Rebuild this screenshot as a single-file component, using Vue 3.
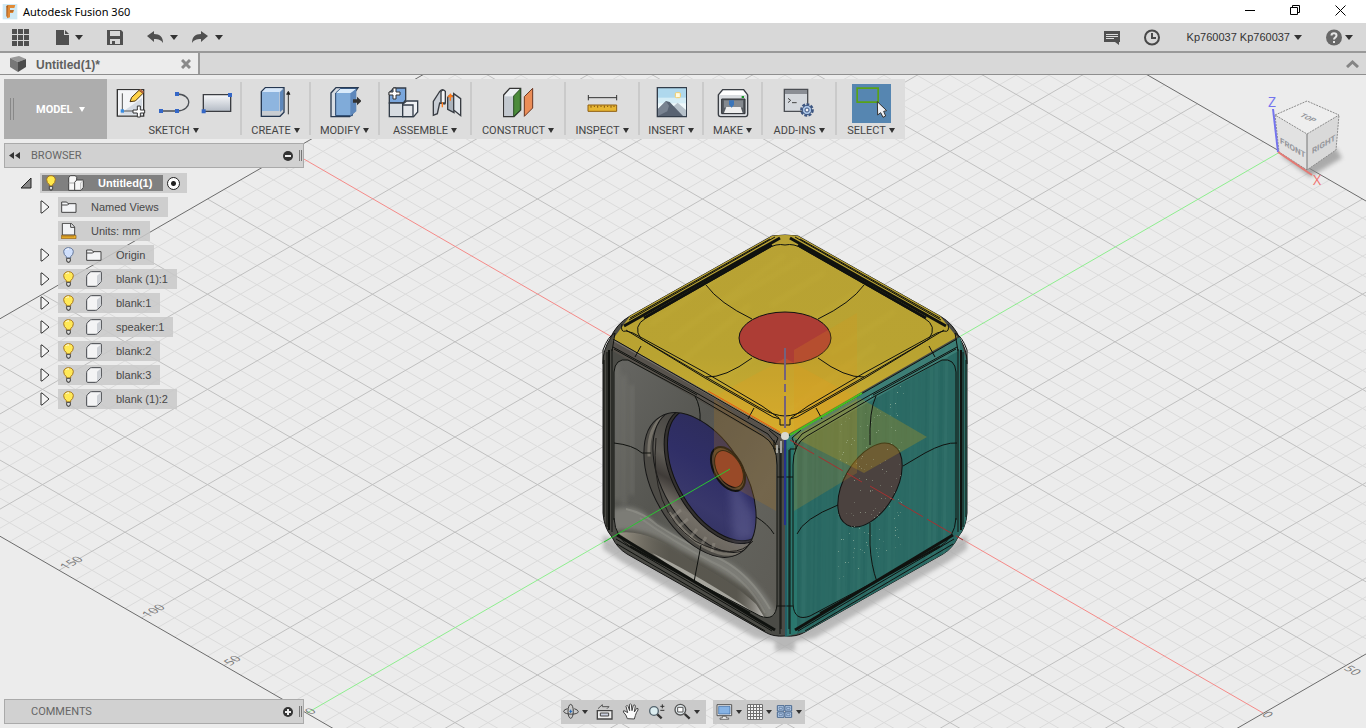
<script setup>
import { ref } from 'vue'

const rows = [
  { label: 'Named Views', kind: 'folder', open: true },
  { label: 'Units: mm', kind: 'units', open: false },
  { label: 'Origin', kind: 'folder', open: true, bulb: 'off' },
  { label: 'blank (1):1', kind: 'body', open: true, bulb: 'on' },
  { label: 'blank:1', kind: 'body', open: true, bulb: 'on' },
  { label: 'speaker:1', kind: 'body', open: true, bulb: 'on' },
  { label: 'blank:2', kind: 'body', open: true, bulb: 'on' },
  { label: 'blank:3', kind: 'body', open: true, bulb: 'on' },
  { label: 'blank (1):2', kind: 'body', open: true, bulb: 'on' },
]
const active = ref('SELECT')

// Ground plane: 16.5 x 9.52 px per minor cell, origin at (785, 437)
const pt = (u, v) => `${(785 + 16.5 * (u + v)).toFixed(1)} ${(437 + 9.52 * (u - v)).toFixed(1)}`
let minor = ''
let major = ''
for (let i = -29; i < 30; i++) {
  if (i === 0) continue
  const a = i < 29 ? `M${pt(i, -29)}L${pt(i, 30)}` : ''
  const b = i > -29 ? `M${pt(-30, i)}L${pt(29, i)}` : ''
  if (i % 5 === 0) major += a + b
  else minor += a + b
}
const border = `M${pt(-30, -29)}L${pt(29, -29)}L${pt(29, 30)}L${pt(-30, 30)}Z`

const specks = []
let seed = 7
const rnd = () => (seed = (seed * 16807) % 2147483647) / 2147483647
for (let i = 0; i < 150; i++) {
  const x = 838 + rnd() * 65
  specks.push({ x: Math.round(x), y: Math.round(395 + rnd() * 170 - (x - 870) * 0.45), o: 0.15 + rnd() * 0.35 })
}
const streaks = []
for (let i = 0; i < 36; i++) streaks.push({ x: 792 + i * 5, w: 1 + rnd() * 3, o: rnd() * 0.13, d: rnd() > 0.5 })
</script>

<template>
  <div class="app">
    <header class="titlebar">
      <svg class="logo" width="16" height="16" viewBox="0 0 48 48"><rect x="2" width="44" height="46" fill="#cfe9f5"/><path d="M13 6l6-3h21l-3 9H24v7h12l-3 8h-9v13l-9 3V12z" fill="#e18a35"/><path d="M13 6l6-3-2 9-1 28-3-3zM24 19h12l-4 4h-8z" fill="#a95d20"/></svg>
      <h1>Autodesk Fusion 360</h1>
      <div class="wincontrols">
        <button aria-label="Minimize"><svg width="11" height="11"><path d="M0 5.500h10" stroke="#000"/></svg></button>
        <button aria-label="Restore"><svg width="11" height="11" fill="none" stroke="#000"><path d="M.5 2.500h7v7h-7zM2.500 2.500v-2h7v7h-2"/></svg></button>
        <button aria-label="Close"><svg width="11" height="11" stroke="#000"><path d="M.5 .5l10 10M10.500 .5l-10 10"/></svg></button>
      </div>
    </header>

    <nav class="quick">
      <button class="gridbtn" aria-label="Data panel"><svg width="17" height="17" fill="#505050"><path d="M0 0h5v5H0zM6 0h5v5H6zM12 0h5v5h-5zM0 6h5v5H0zM6 6h5v5H6zM12 6h5v5h-5zM0 12h5v5H0zM6 12h5v5H6zM12 12h5v5h-5z"/></svg></button>
      <button class="split" aria-label="File"><svg width="14" height="17" fill="#505050"><path d="M0 1h8v5h5v10H0zM9 1l4 4H9z"/></svg><i class="caret"></i></button>
      <button aria-label="Save"><svg width="16" height="17"><path d="M0 1h14l2 2v13H0z" fill="#505050"/><path d="M3 2h10v5H3z" fill="#d8d8d8"/><path d="M3 10h10v5H3z" fill="#d8d8d8"/><path d="M5 12h3v3H5z" fill="#505050"/></svg></button>
      <div class="history">
        <button class="split" aria-label="Undo"><svg width="17" height="17"><path d="M0 7l7-5v3c6 0 9 3 9 9-2-3-4-4-9-4v3z" fill="#505050"/></svg><i class="caret"></i></button>
        <button class="split" aria-label="Redo"><svg width="17" height="17"><path d="M16 7l-7-5v3c-6 0-9 3-9 9 2-3 4-4 9-4v3z" fill="#505050"/></svg><i class="caret"></i></button>
      </div>
      <div class="account">
        <button aria-label="Notifications"><svg width="16" height="17"><path d="M0 2h16v11h-1v3l-4-3H0z" fill="#505050"/><path d="M2 5.500h12M2 7.500h12M2 9.500h8" stroke="#ddd"/></svg></button>
        <button aria-label="Job status"><svg width="16" height="17" fill="none" stroke="#484848" stroke-width="2"><circle cx="8" cy="8.500" r="7"/><path d="M8 4v5h4"/></svg></button>
        <button class="user">Kp760037 Kp760037<i class="caret"></i></button>
        <button class="split help" aria-label="Help"><svg width="17" height="17"><circle cx="8" cy="8.500" r="8" fill="#686868"/><path d="M5.500 6.500c0-3 5-3 5 0 0 2-2.500 2-2.500 4M8 12v2" fill="none" stroke="#e6e6e6" stroke-width="2"/></svg><i class="caret"></i></button>
      </div>
    </nav>

    <div class="tabs">
      <div class="tab">
        <svg width="16" height="16"><path d="M0 2l9-2 7 3-8 3z" fill="#999"/><path d="M0 2l8 4v10l-8-5z" fill="#777"/><path d="M8 6l8-3v8l-8 5z" fill="#4c4c4c"/></svg>
        <span>Untitled(1)*</span>
        <button aria-label="Close tab"><svg width="10" height="10" stroke="#8a8a8a" stroke-width="3"><path d="M1 1l8 8M9 1L1 9"/></svg></button>
      </div>
      <button class="collapse" aria-label="Collapse"><svg width="13" height="9" fill="none" stroke="#858585" stroke-width="3"><path d="M1 8l5.500-5L12 8"/></svg></button>
    </div>

    <main class="workspace">
      <svg class="scene" viewBox="0 75 1366 653" preserveAspectRatio="xMidYMid slice" aria-label="Model view">
        <defs>
          <linearGradient id="gold" x1="0" y1="0" x2="0" y2="1"><stop offset="0" stop-color="#b8a234"/><stop offset=".6" stop-color="#b9a331"/><stop offset="1" stop-color="#d2b030"/></linearGradient>
          <linearGradient id="metal" x1="0" y1="0" x2="1" y2="1"><stop offset="0" stop-color="#686864"/><stop offset=".4" stop-color="#565651"/><stop offset=".7" stop-color="#62625c"/><stop offset="1" stop-color="#5c5a54"/></linearGradient>
          <linearGradient id="cone" x1="0" y1="0" x2="1" y2="1"><stop offset="0" stop-color="#2c2b54"/><stop offset=".5" stop-color="#302f67"/><stop offset=".75" stop-color="#39386b"/><stop offset="1" stop-color="#2f2f5d"/></linearGradient>
          <linearGradient id="wall" x1="0" y1="0" x2="1" y2="1"><stop offset="0" stop-color="#3d3c39"/><stop offset=".3" stop-color="#4c4a46"/><stop offset=".5" stop-color="#5f5c56"/><stop offset=".62" stop-color="#3f3b38"/><stop offset=".75" stop-color="#757068"/><stop offset="1" stop-color="#5a564f"/></linearGradient>
          <linearGradient id="edgeglow" x1="0" y1="0" x2="1" y2="0"><stop offset="0" stop-color="#b9b1a0" stop-opacity=".7"/><stop offset=".35" stop-color="#6a675e" stop-opacity=".2"/><stop offset=".8" stop-color="#6a675e" stop-opacity=".2"/><stop offset="1" stop-color="#c9c7c2"/></linearGradient>
          <filter id="soft" x="-20%" y="-20%" width="140%" height="140%"><feGaussianBlur stdDeviation="2"/></filter>
          <filter id="blend" x="-20%" y="-20%" width="140%" height="140%"><feGaussianBlur stdDeviation="4"/></filter>
          <clipPath id="hole"><ellipse cx="700" cy="485" rx="79" ry="46" transform="rotate(60 700 485)"/></clipPath>
          <clipPath id="teal"><path d="M785 437L960 337L967 362V513Q966 528 958 537Q953 548 943 554L805 632L785 637z"/></clipPath>
          <clipPath id="panel"><path d="M614 372Q615 358 628 360L765 438Q777 446 777 465V605Q776 622 760 616L632 548Q614 536 614 518z"/></clipPath>
        </defs>

        <path :d="minor" fill="none" stroke="#dbdbdb"/>
        <path :d="major" fill="none" stroke="#c0c0c0"/>
        <path :d="border" fill="none" stroke="#6c6c6c"/>
        <path d="M290 151L785 437" stroke="#f58a88"/>
        <path d="M785 437L1263 713" stroke="#f58a88"/>
        <path d="M307 713L1280 152" stroke="#8eee8e"/>
        <!-- labels lie flat on the ground plane -->
        <g class="ticks">
          <text transform="matrix(.87 -.5 .87 .5 66 570)">150</text>
          <text transform="matrix(.87 -.5 .87 .5 148 618)">100</text>
          <text transform="matrix(.87 -.5 .87 .5 230 666)">50</text>
          <text transform="matrix(.87 -.5 .87 .5 311 715)">0</text>
          <text transform="matrix(.87 .5 -.87 .5 1261 715)">0</text>
          <text transform="matrix(.87 .5 -.87 .5 1343 669)">50</text>
        </g>

        <path d="M603 535L603 549L622 562L755 638L775 642V651H795V642L815 638L948 562L967 549V535L785 610z" fill="#a7a7a7" opacity=".75" filter="url(#soft)"/>

        <!-- cube body -->
        <path d="M772 236Q785 234 798 236L940 316Q954 324 960 339Q967 350 967 362V513Q966 528 958 537Q953 548 943 554L805 632Q797 637 785 636Q773 637 765 632L627 554Q617 548 612 537Q604 528 603 513V362Q603 350 610 339Q616 324 630 316z" fill="#4b4b46" stroke="#161616"/>
        <path d="M785 437L960 337L967 362V513Q966 528 958 537Q953 548 943 554L805 632L785 636z" fill="#2b6a64"/>
        <g clip-path="url(#teal)">
          <path v-for="s in streaks" :key="s.x" :d="`M${s.x} 330l-4 310`" :stroke="s.d ? '#0e4a49' : '#5d9a8d'" :stroke-width="s.w" :opacity="s.o"/>
          <path d="M785 437L960 337V350L785 450z" fill="#4a8c82" opacity=".6"/>
          <path d="M785 437h12v200h-12z" fill="#2c8175" opacity=".6"/>
        </g>
        <path d="M772 236Q785 234 798 236L940 316L957 337L785 436L613 339L630 316z" fill="url(#gold)"/>
        <g stroke="#d0bd47" stroke-width="5" opacity=".12" filter="url(#soft)"><path d="M650 325L745 257M670 340L785 255M683 360L750 305M720 380L765 350M800 260L715 310M825 272L770 306M860 290L805 325M895 311L830 354M875 345L790 410M850 363L805 398"/></g>
        <path d="M613 339L785 436V449L611 350z" fill="#57524c"/>
        <path d="M613 340L785 437" stroke="#7a756d" stroke-width="2"/>

        <!-- front panel -->
        <g clip-path="url(#panel)">
          <path d="M610 350H780V630H610z" fill="url(#metal)"/>
          <path d="M617 365V500M624 375V505M632 385V495" stroke="#7c7c77" stroke-width="5" opacity=".4" filter="url(#soft)"/>
          <path d="M612 510Q636 500 655 523Q685 541 716 556Q752 570 776 612L772 625L612 543z" fill="#7b7b76" filter="url(#soft)"/>
          <path d="M612 532Q640 524 680 550Q720 570 748 590Q761 602 766 622L612 545z" fill="#55524b" filter="url(#soft)"/>
          <path d="M618 533Q648 528 690 560Q730 580 756 604L766 620L690 582z" fill="url(#edgeglow)"/>
          <path d="M626 509Q644 513 657 525Q690 546 716 557Q748 571 770 609" fill="none" stroke="#9a9992" stroke-width="2" opacity=".5"/>
          <path d="M640 518Q672 541 712 562Q746 577 765 613" fill="none" stroke="#96958e" stroke-width="2" opacity=".4"/>
          <path d="M652 553Q690 571 740 603L757 615L694 583z" fill="#c6c4bd" opacity=".7"/>
        </g>
        <g clip-path="url(#hole)">
          <path d="M640 405H765V565H640z" fill="#4d4b46"/>
          <ellipse cx="704" cy="483" rx="78" ry="45" transform="rotate(60 704 483)" fill="none" stroke="#a8a195" stroke-width="3" stroke-dasharray="90 60 120 400" opacity=".45"/>
          <ellipse cx="709" cy="480" rx="79" ry="46" transform="rotate(60 709 480)" fill="url(#wall)" stroke="#171717"/>
          <path d="M671 518l10-8M678 527l10-8M690 538l7-9M701 546l5-9M712 552l2-9" stroke="#a19c91" stroke-width="3" opacity=".4"/>
          <ellipse cx="717" cy="475" rx="75" ry="43" transform="rotate(60 717 475)" fill="#34312f" stroke="#111"/>
          <ellipse cx="719" cy="474" rx="73" ry="42" transform="rotate(60 719 474)" fill="url(#cone)" stroke="#111"/>
          <path d="M728 469L734 542L754 538V515z" fill="#7070a1" opacity=".4" filter="url(#blend)"/>
        </g>
        <ellipse cx="700" cy="485" rx="79" ry="46" transform="rotate(60 700 485)" fill="none" stroke="#161616"/>
        <path d="M656 438Q649 510 695 541Q735 562 753 541" fill="none" stroke="#22201e"/>
        <ellipse cx="728" cy="469" rx="24" ry="14" transform="rotate(60 728 469)" fill="#55432f" stroke="#111" stroke-width="2"/>
        <ellipse cx="729" cy="469" rx="20" ry="12" transform="rotate(60 729 469)" fill="#953c2b" stroke="#17110c"/>

        <ellipse cx="785" cy="338" rx="46" ry="26" fill="#ad3d35" stroke="#111"/>
        <ellipse cx="870" cy="485" rx="46" ry="26" transform="rotate(-60 870 485)" fill="#4b423f" stroke="#111"/>

        <!-- origin planes -->
        <path d="M714 399V476L776 511V444z" fill="#a87320" opacity=".27"/>
        <path d="M794 350L857 313V473L794 511z" fill="#dc951b" opacity=".2"/>
        <path d="M714 397L785 358L857 398L785 437z" fill="#f29b17" opacity=".2"/>
        <path d="M793 437L860 398L927 437L864 473z" fill="#b7941b" opacity=".33"/>
        <rect v-for="(p, i) in specks" :key="i" :x="p.x" :y="p.y" width="1" height="1" fill="#c4d5bc" :opacity="p.o"/>

        <!-- symmetric edge lines: left half, then its mirror -->
        <g v-for="side in ['', 'translate(1570 0) scale(-1 1)']" :key="side" :transform="side" class="edges">
          <path d="M624 326L780 238" stroke-width="3"/>
          <path d="M630 318L770 239M629 320L775 237"/>
          <path d="M644 318L772 245" stroke-width="3"/>
          <path d="M785 245Q776 243 767 249L646 318Q632 326 641 339L706 377L760 408Q775 416 785 416"/>
          <path d="M706 285Q719 303 752 319M706 377Q725 378 752 358"/>
          <path d="M622 324q-2 9 4 7l7 2L706 373L762 406L779 418M626 330L705 378L773 417l7 2v6h5"/>
          <path d="M613 339L782 436M613 347L700 395L768 434l7 9M614 349L697 395"/>
          <path d="M641 346l-6 11M754 408l-6 11"/>
          <path d="M614 520V372Q615 358 628 360L695 396L763 436Q777 444 777 465V604Q776 622 760 616L632 548Q615 538 614 518"/>
          <path d="M777 477H785M777 606H785"/>
          <path d="M604 360V517M607 352V527M612 349V532"/>
          <path d="M609 350V530" stroke-width="2"/>
          <path d="M617 535L775 630" stroke-width="3"/>
          <path d="M616 539L772 631M617 544L765 631"/>
          <path d="M630 546L750 613" stroke-width="2"/>
          <path d="M781 450V629M774 440v9h6v185M769 430l9 8-3 7"/>
          <path d="M603 364V350Q608 336 615 333l-3 18"/>
        </g>
        <g class="edges">
          <path d="M695 396Q701 407 700 421M614 443Q633 445 642 453H651M756 517Q768 524 774 534M701 545L694 582"/>
          <path d="M876 396Q869 410 870 445M957 443Q945 442 925 453L903 466M838 505Q803 519 797 534M870 523V545Q871 565 877 582"/>
        </g>
        <path d="M786 437V636" stroke="#1c4860"/>
        <path d="M785 437V525" stroke="#25328c" stroke-width="2"/>
        <path d="M785 348V437" stroke="#73627e" stroke-width="2" stroke-dasharray="32 4 8 4"/>
        <path d="M708 391L780 432" stroke="#e65517"/>
        <path d="M790 435L862 393" stroke="#44c51d" stroke-width="2"/>
        <path d="M604 542L730 469" stroke="#2ac632"/>
        <path d="M790 440L862 482M870 486L963 540" stroke="#a53030" stroke-dasharray="28 5"/>
        <circle cx="785" cy="436" r="4" fill="#d9d9d0"/>
        <path d="M777 445v8M781 441v12" stroke="#a7a7a0" stroke-width="2"/>
      </svg>

      <svg class="viewcube" width="90" height="100" viewBox="1260 92 90 100" aria-label="View cube">
        <path d="M1280 155L1310 177L1342 158L1336 148z" fill="#888" opacity=".65" filter="url(#soft)"/>
        <path d="M1275 115L1307 101L1339 115L1307 134z" fill="#eee"/>
        <path d="M1275 115L1307 134V170L1279 152z" fill="#e2e2e2"/>
        <path d="M1307 134L1339 115L1336 150L1307 170z" fill="#d9d9d9"/>
        <path d="M1275 115L1307 101L1339 115L1307 134zL1279 152L1307 170L1336 150L1339 115" fill="none" stroke="#8b8b8b" stroke-dasharray="2 1"/>
        <path d="M1307 134V170" stroke="#777"/>
        <path d="M1273 109L1278 152" stroke="#7474ee" stroke-width="2"/>
        <path d="M1278 152L1312 175" stroke="#e57973" stroke-width="2"/>
        <text class="axis z" x="1268" y="107">Z</text>
        <text class="axis x" x="1313" y="185">X</text>
        <text class="face" transform="translate(1280 143) skewY(31)">FRONT</text>
        <text class="face" transform="translate(1312 154) skewY(-31)">RIGHT</text>
        <text class="face" transform="matrix(.9 .4 -.8 .5 1299 116)">TOP</text>
      </svg>

      <div class="overlay">
        <div class="ribbon">
          <button class="mode"><span class="grip"></span>MODEL<i class="caret light"></i></button>
          <section class="group sketch">
            <div class="tools">
              <button aria-label="Create sketch"><svg width="32" height="32" viewBox="345 261 96 96"><path d="M352 269h79v79h-79z" fill="#e9edf3" stroke="#333" stroke-width="4"/><path d="M354 271h75v75h-75z" fill="#f4f5f7"/><path d="M356 344l70-50v50z" fill="#d5dbe3"/><path d="M367 280v53h42" fill="none" stroke="#555" stroke-width="3"/><rect x="362" y="328" width="10" height="10" fill="#388be0"/><path d="M390 305l5-13 22-21 12 9-23 23z" fill="#ffd347" stroke="#4c3511" stroke-width="3"/><path d="M417 271l5-4 10 8-4 6z" fill="#b76a3d"/><path d="M399 330h13v-12h9v12h13v9h-13v12h-9v-12h-13z" fill="#fff" stroke="#333" stroke-width="3"/></svg></button>
              <button aria-label="Line"><svg width="32" height="32" viewBox="474 261 96 96"><path d="M483 333h48c46 0 48-51 0-51" fill="none" stroke="#4b4f54" stroke-width="4"/><path d="M477 327h12v12h-12zM525 327h12v12h-12zM525 276h12v12h-12z" fill="#3467c7"/></svg></button>
              <button aria-label="Rectangle"><svg width="32" height="32" viewBox="603 261 96 96"><defs><linearGradient id="sheet" x1="0" y1="0" x2="0" y2="1"><stop offset="0" stop-color="#f8f9fb"/><stop offset="1" stop-color="#b3bac4"/></linearGradient></defs><path d="M610 284h82v50h-82z" fill="url(#sheet)" stroke="#3b3d42" stroke-width="4"/><path d="M605 328h12v12h-12zM684 279h12v12h-12z" fill="#3467c7"/></svg></button>
            </div><button class="label">SKETCH<i class="caret"></i></button>
          </section>
          <section class="group create"><div class="tools"><button aria-label="Create"><svg width="32" height="32" viewBox="780 261 96 96"><path d="M784 275l12-12h56v74l-12 12h-56z" fill="#c9cdd2" stroke="#263852" stroke-width="4"/><path d="M786 276l11-11h51l-9 11z" fill="#d4e6fa"/><path d="M786 276h52v57h-52z" fill="#8eb5df"/><path d="M840 276l10-10v62l-10 8z" fill="#5d87bb"/><path d="M865 343v-62M860 283l5-9 5 9z" stroke="#333" stroke-width="3"/></svg></button></div><button class="label">CREATE<i class="caret"></i></button></section>
          <section class="group modify"><div class="tools"><button aria-label="Modify"><svg width="32" height="32" viewBox="984 261 96 96"><path d="M990 279l15-16h66l-12 17v55l-13 15h-56z" fill="#d8dde4" stroke="#29394f" stroke-width="4"/><path d="M1004 279l15-14h48l-13 14v68h-50z" fill="#80abd9" stroke="#24436b" stroke-width="3"/><path d="M1018 267h48l-14 12h-46z" fill="#d9eafa"/><path d="M1048 280l18-14v68l-18 14z" fill="#5d87bb"/><path d="M1056 298h12v-8l14 13-14 13v-8h-12z" fill="#333"/></svg></button></div><button class="label">MODIFY<i class="caret"></i></button></section>
          <section class="group assemble"><div class="tools">
            <button aria-label="New component"><svg width="32" height="32" viewBox="1161 261 96 96"><g stroke="#333d49" stroke-width="4"><path d="M1168 278l14-14h35v36l-7 9h-42z" fill="#79a6dc"/><path d="M1168 309h40v41h-40z" fill="#d7dce1"/><path d="M1208 313l12-10h33v33l-12 14h-33z" fill="#f0f2f5"/><path d="M1208 315h31v35h-31z" fill="#e2e5e9"/></g><path d="M1167 276h12v-12h9v12h12v9h-12v12h-9v-12h-12z" fill="#fff" stroke="#333" stroke-width="3"/></svg></button>
            <button aria-label="Joint"><svg width="32" height="32" viewBox="1293 261 96 96"><g stroke="#383c42" stroke-width="4"><path d="M1300 304l18-28q10-14 16 0v36l-15-3-7 32-12 5z" fill="#c9ced5"/><path d="M1323 275v34h13v-35q-7-8-13 1z" fill="#f4f5f6"/><path d="M1343 292q8-12 19 0v46l-19-10z" fill="#aab2bc"/><path d="M1361 281l21 15v51l-21-17z" fill="#e1e5ea"/></g><path d="M1327 307v15M1351 302v-17M1346 290l5-7 5 7z" stroke="#ff7a18" stroke-width="4"/></svg></button>
          </div><button class="label">ASSEMBLE<i class="caret"></i></button></section>
          <section class="group construct"><div class="tools"><button aria-label="Construct"><svg width="32" height="32" viewBox="156 51 96 96"><path d="M161 75l18-20h33v65l-20 20h-31z" fill="#eceff2" stroke="#353535" stroke-width="4"/><path d="M163 79h27v59h-27z" fill="#c3c9d0"/><path d="M191 78l20-21v63l-20 19z" fill="#4b8b3b" stroke="#274d22" stroke-width="3"/><path d="M223 80l25-25v59l-25 25z" fill="#eb8d57" stroke="#6d3620" stroke-width="3"/></svg></button></div><button class="label">CONSTRUCT<i class="caret"></i></button></section>
          <section class="group inspect"><div class="tools"><button aria-label="Measure"><svg width="32" height="32" viewBox="405 51 96 96"><path d="M412 83h85M412 75v16M497 75v16" stroke="#333" stroke-width="3"/><path d="M411 105h86v19h-86z" fill="#e7b632" stroke="#905e10" stroke-width="3"/><path d="M420 107v6M430 107v4M440 107v6M450 107v4M460 107v6M470 107v4M480 107v6M489 107v4" stroke="#80500d" stroke-width="3"/></svg></button></div><button class="label">INSPECT<i class="caret"></i></button></section>
          <section class="group insert"><div class="tools"><button aria-label="Insert image"><svg width="32" height="32" viewBox="612 51 96 96"><path d="M619 53h88v87h-88z" fill="#afd8ed" stroke="#333d4a" stroke-width="4"/><path d="M621 83h84v27h-84z" fill="#d5edf6"/><path d="M621 100h84v20h-84z" fill="#eef8fb"/><rect x="673" y="68" width="15" height="15" rx="3" fill="#fffce4" stroke="#f5cc65" stroke-width="3"/><path d="M655 120l25-22 25 22v18h-50z" fill="#b6c1ca"/><path d="M621 117l24-24 11 3 40 42h-75z" fill="#596372"/><path d="M645 94l9 13-5 17-28 14v-20z" fill="#798391"/></svg></button></div><button class="label">INSERT<i class="caret"></i></button></section>
          <section class="group make"><div class="tools"><button aria-label="3D print"><svg width="32" height="32" viewBox="801 51 96 96"><path d="M805 75l13-16h63l12 16v58q0 7-7 7h-74q-7 0-7-7z" fill="#d9dce0" stroke="#3b3f45" stroke-width="4"/><path d="M808 75l12-13h59l11 13z" fill="#fff"/><path d="M815 87h70v44h-70z" fill="#555a60" stroke="#2c2f33" stroke-width="3"/><path d="M822 91h57v22h-57z" fill="#84898f"/><path d="M829 111h43l6 18h-56z" fill="#eee"/><path d="M837 91h15v13l-7 9-8-9z" fill="#3a75ba"/><rect x="875" y="78" width="7" height="6" fill="#199528"/></svg></button></div><button class="label">MAKE<i class="caret"></i></button></section>
          <section class="group addins"><div class="tools"><button aria-label="Scripts"><svg width="32" height="32" viewBox="999 51 96 96"><path d="M1003 58h70v66h-70z" fill="#d4d8dd" stroke="#4b4e53" stroke-width="4"/><path d="M1005 60h66v12h-66z" fill="#8a8e95"/><path d="M1014 85l8 6-8 7M1026 98h14" fill="none" stroke="#444" stroke-width="3"/><g transform="translate(1071 120)"><circle r="16" fill="none" stroke="#3d5681" stroke-width="9" stroke-dasharray="8 4"/><circle r="14" fill="#a9c3e4" stroke="#3d5681" stroke-width="3"/><circle r="6" fill="#f2f4f7" stroke="#3d5681" stroke-width="3"/></g></svg></button></div><button class="label">ADD-INS<i class="caret"></i></button></section>
          <section class="group select"><div class="tools"><button class="on" aria-label="Select" :aria-pressed="active === 'SELECT'"><svg width="39" height="39" viewBox="1203 41 117 117"><path d="M1218.500 53.500h63v42h-63z" fill="none" stroke="#58a217" stroke-width="5"/><path d="M1279 94l1 40 9-7 7 14 8-4-6-14 9-2z" fill="#eef0f4" stroke="#333" stroke-width="3"/></svg></button></div><button class="label">SELECT<i class="caret"></i></button></section>
        </div>

        <div class="dock top">
          <svg width="11" height="7" fill="#333"><path d="M0 3.500L5 0v7zM6 3.500L11 0v7z"/></svg><span>BROWSER</span>
          <button aria-label="Hide browser"><svg width="10" height="10"><circle cx="5" cy="5" r="5" fill="#333"/><path d="M2 5h6" stroke="#eee" stroke-width="2"/></svg></button><i class="handle"></i>
        </div>

        <ul class="tree">
          <li class="root">
            <button class="expander" aria-label="Collapse tree"><svg width="12" height="12"><path d="M11 1v10H1z" fill="#888" stroke="#222"/></svg></button>
            <div class="rootbox"><div class="rootname">
              <svg width="10" height="16" viewBox="0 0 30 48"><path d="M10 29Q2 23 2 14C2-2 28-2 28 14q0 9-8 15v4H10z" fill="#ffe94c" stroke="#a6751d" stroke-width="3"/><path d="M10 34h10v9h-3v3h-4v-3h-3z" fill="#ddd" stroke="#444" stroke-width="3"/></svg>
              <svg class="assembly" width="16" height="16" viewBox="0 0 48 48" stroke="#444" stroke-width="3" fill="#f7f7f7"><path d="M2 8l5-6h15l4 5v35l-4 4H2z"/><path d="M2 24h18" stroke="#aaa"/><path d="M20 22l6-7h20v22l-7 9H20z"/><path d="M38 45V24l7-7" fill="none" stroke="#bbb"/></svg>
              <strong>Untitled(1)</strong></div>
              <label class="radio"><input type="radio" name="activate" checked aria-label="Activate component"></label>
            </div>
          </li>
          <li v-for="row in rows" :key="row.label">
            <button v-if="row.open" class="expander" :aria-label="`Expand ${row.label}`"><svg width="10" height="14"><path d="M1 1h1l7 6-7 6H1z" fill="#f5f5f5" stroke="#333"/></svg></button>
            <span v-else class="expander"></span>
            <div class="node">
              <svg v-if="row.bulb" class="bulb" width="11" height="16" viewBox="0 0 33 48"><path d="M10 29Q2 23 2 14C2-2 31-2 31 14q0 9-8 15v4H10z" :fill="row.bulb === 'on' ? '#ffe957' : '#cfdffc'" :stroke="row.bulb === 'on' ? '#a77720' : '#63779b'" stroke-width="3"/><path d="M10 8q4-4 8-2" stroke="#fff" fill="none" stroke-width="3"/><path d="M11 34h11v9h-3v3h-5v-3h-3z" fill="#ddd" stroke="#444" stroke-width="3"/></svg>
              <svg v-if="row.kind === 'folder'" width="16" height="16" viewBox="0 0 48 48"><path d="M2 9h15l4 5h24v26H2z" fill="#f3f4f6" stroke="#444" stroke-width="3"/><path d="M3 18h17l4-4" fill="none" stroke="#444" stroke-width="3"/></svg>
              <svg v-else-if="row.kind === 'units'" width="16" height="16" viewBox="0 0 48 48"><path d="M4 1h27l10 11v24H4z" fill="#f2f3f5" stroke="#444" stroke-width="3"/><path d="M29 1v12h12" fill="none" stroke="#444" stroke-width="3"/><path d="M1 37h44v10H1z" fill="#efb32a" stroke="#865510" stroke-width="2"/><path d="M6 39v4M12 39v4M18 39v4M24 39v4M30 39v4M36 39v4" stroke="#865510" stroke-width="2"/></svg>
              <svg v-else width="16" height="16" viewBox="0 0 48 48"><path d="M2 17Q2 13 5 10L13 3Q14 2 17 2H44Q46 2 46 5V29Q46 32 43 35L34 44Q32 46 28 46H5Q2 46 2 43z" fill="#f4f4f5" stroke="#44464b" stroke-width="3"/><path d="M33 44V14L44 5V31z" fill="#ced1d6"/></svg>
              <span :class="row.bulb ? 'deep' : 'name'">{{ row.label }}</span>
            </div>
          </li>
        </ul>

        <footer class="bottom">
          <div class="dock"><span class="comments">COMMENTS</span><button aria-label="Add comment"><svg width="10" height="10"><circle cx="5" cy="5" r="5" fill="#333"/><path d="M2 5h6M5 2v6" stroke="#eee" stroke-width="2"/></svg></button><i class="handle"></i></div>
          <div class="navbars">
            <div class="bar view">
              <button class="split" aria-label="Orbit"><svg width="18" height="18" viewBox="36 39 54 54" fill="none" stroke="#444" stroke-width="3"><ellipse cx="62" cy="64" rx="8" ry="21"/><path d="M73 56q12 4 12 9c0 10-40 10-44 0q0-7 12-9"/><path d="M58 64h9M62 59v10" stroke="#2466b5"/></svg><i class="caret"></i></button>
              <button aria-label="Look at"><svg width="18" height="18" viewBox="136 39 54 54"><path d="M140 62h44v25h-44z" fill="#eee" stroke="#444" stroke-width="4"/><path d="M149 69h25v9h-25z" fill="#ccd2e0" stroke="#444" stroke-width="3"/><path d="M142 56l13-12v6h20l-6 6" fill="none" stroke="#555" stroke-width="3"/></svg></button>
              <button aria-label="Pan"><svg width="18" height="18" viewBox="214 39 54 54"><path d="M230 86q-3-12-12-20-1-6 5-3l8 5-5-19q3-6 6 0l5 13-1-18q4-5 6 0l2 18 4-16q5-4 6 2l-3 18 7-11q6-1 4 5-6 8-8 17l-3 10z" fill="#fafafa" stroke="#444" stroke-width="3"/></svg></button>
              <button aria-label="Zoom"><svg width="18" height="18" viewBox="291 39 54 54"><circle cx="309" cy="63" r="13" fill="#dcedf0" stroke="#53636d" stroke-width="4"/><path d="M319 73l13 12" stroke="#333" stroke-width="7"/><path d="M328 49h12M334 43v12M328 61h12" stroke="#333" stroke-width="3"/></svg></button>
              <button class="split" aria-label="Fit"><svg width="18" height="18" viewBox="370 39 54 54"><circle cx="389" cy="59" r="16" fill="#e4ecef" stroke="#555" stroke-width="4"/><path d="M381 52h16v14h-16z" fill="#fff" stroke="#555" stroke-width="3"/><path d="M402 72l15 14" stroke="#333" stroke-width="7"/></svg><i class="caret"></i></button>
            </div>
            <div class="bar">
              <button class="split" aria-label="Display settings"><svg width="18" height="18" viewBox="494 39 54 54"><path d="M497 44h44v33h-44z" fill="#eee" stroke="#555" stroke-width="3"/><path d="M502 49h34v23h-34z" fill="#86b3e5" stroke="#315f99" stroke-width="2"/><path d="M513 79h12v5h7v4h-26v-4h7z" fill="#eee" stroke="#444" stroke-width="2"/></svg><i class="caret"></i></button>
              <button class="split" aria-label="Grid settings"><svg width="18" height="18"><path d="M1 1h16v16H1z" fill="#f3f3f3"/><path d="M1.500 1.500h15v15h-15zM4.500 1v16M7.500 1v16M10.500 1v16M13.500 1v16M1 4.500h16M1 7.500h16M1 10.500h16M1 13.500h16" fill="none" stroke="#6f6f6f"/></svg><i class="caret"></i></button>
              <button class="split" aria-label="Viewports"><svg width="18" height="18" viewBox="678 39 54 54" fill="#bbd1ec" stroke="#47678f" stroke-width="3"><path d="M682 47h20v16h-20zM705 47h20v16h-20zM682 66h20v16h-20zM705 66h20v16h-20z"/><path d="M687 52h10v6h-10zM710 52h10v6h-10zM687 71h10v6h-10zM710 71h10v6h-10z" stroke-width="2"/></svg><i class="caret"></i></button>
            </div>
          </div>
        </footer>
      </div>
    </main>
  </div>
</template>

<style>
body { margin: 0; background: #ececec; }
</style>
<style scoped>
.app { display: flex; flex-direction: column; height: 100vh; overflow: hidden; font: 11px "Liberation Sans", Arial, sans-serif; color: #333; }
button { border: 0; padding: 0; margin: 0; background: none; font: inherit; color: inherit; display: flex; align-items: center; }
svg { display: block; flex: none; }
.caret { flex: none; width: 0; height: 0; border: 4px solid transparent; border-top: 5px solid #333; border-bottom: 0; }
.split { justify-content: space-between; }
.titlebar { flex: none; height: 23px; display: flex; align-items: center; background: #fff; padding: 0 20px 0 2px; box-sizing: border-box; }
.titlebar h1 { margin: 0 0 0 5px; font: 11px "Noto Sans", "Open Sans", sans-serif; color: #000; }
.wincontrols { margin-left: auto; display: flex; gap: 34px; padding-bottom: 3px; }
.quick { flex: none; height: 28px; background: #d8d8d8; border-bottom: 2px solid #999; display: flex; align-items: center; gap: 24px; padding: 0 13px 0 12px; }
.gridbtn { width: 20px; }
.quick .split { width: 27px; }
.quick .history .split { width: 31px; }
.history { display: flex; gap: 14px; }
.account { margin-left: auto; display: flex; align-items: center; gap: 24px; }
.account .user { margin-left: 3px; gap: 4px; }
.tabs { flex: none; height: 21px; background: #d8d8d8; border-bottom: 1px solid #8e8e8e; display: flex; justify-content: space-between; align-items: center; padding-right: 7px; }
.tab { width: 181px; height: 21px; border-right: 2px solid #999; background: #ececec; display: flex; align-items: center; padding: 0 7px 0 10px; }
.tab span { margin: 3px auto 0 10px; font-weight: bold; font-size: 12px; color: #5f5f5f; }
.workspace { position: relative; flex: 1; min-height: 0; background: #ececec; }
.scene { position: absolute; inset: 0; width: 100%; height: 100%; }
.edges path { fill: none; stroke: #10120f; }
.ticks text { font: 12px "Open Sans", sans-serif; fill: #777; }
.viewcube { position: absolute; right: 16px; top: 17px; }
.axis { font: 14px "Open Sans", sans-serif; }
.z { fill: #7474ee; }
.x { fill: #f0716e; }
.face { font: bold 8px Roboto, sans-serif; fill: #94969b; }
.overlay { position: relative; height: 100%; box-sizing: border-box; padding: 4px; display: flex; flex-direction: column; align-items: flex-start; }
.ribbon { flex: none; height: 60px; display: flex; background: #dddddd; font-family: Roboto, sans-serif; color: #444; }
.ribbon .caret { border-width: 5px 3px 0; }
.mode { width: 103px; background: #adadad; color: #fff; font-weight: bold; gap: 6px; }
.grip { width: 2px; height: 22px; margin: 0 16px 0 6px; border: solid #888; border-width: 0 1px; }
.ribbon .caret.light { border-top-color: #fff; }
.group { box-sizing: border-box; padding-top: 4px; display: flex; flex-direction: column; align-items: center; border-right: 2px solid #cdcdcd; border-image: linear-gradient(transparent 4px, #cacaca 4px 55px, transparent 55px) 1; }
.tools { flex: none; height: 40px; display: flex; align-items: center; gap: 11px; }
.assemble .tools { gap: 12px; }
.label { flex: none; gap: 3px; height: 13px; line-height: 13px; margin-top: 1px; white-space: nowrap; }
.sketch { width: 135px; }
.create { width: 69px; }
.modify { width: 69px; }
.assemble { width: 92px; }
.construct { width: 94px; }
.inspect { width: 74px; }
.insert { width: 64px; }
.make { width: 59px; }
.addins { width: 74px; }
.select { width: 68px; border: 0; }
.on { background: #5686b1; }
.dock { box-sizing: border-box; width: 300px; height: 25px; border: 1px solid #aaa; background: #d1d1d1; display: flex; align-items: center; padding: 0 1px 0 4px; font-family: Roboto, sans-serif; color: #666; }
.dock.top { margin-top: 4px; flex: none; }
.dock span { margin: 0 auto 0 11px; }
.dock .comments { margin-left: 22px; }
.handle { width: 1px; height: 11px; margin-left: 6px; border: solid #777; border-width: 0 1px; }
.tree { list-style: none; margin: 5px 0 auto 16px; padding: 0; display: flex; flex-direction: column; gap: 4px; }
.tree li { height: 20px; display: flex; align-items: center; padding-left: 20px; }
.tree .root { padding-left: 0; }
.expander { width: 18px; }
.root .expander { width: 20px; }
.node, .rootbox { height: 20px; box-sizing: border-box; background: rgba(200, 200, 200, .86); display: flex; align-items: center; color: #484848; }
.node { padding: 0 9px 0 3px; }
.node .bulb { margin: 0 12px 0 2px; }
.node .name { margin-left: 14px; }
.node .deep { margin-left: 14px; }
.rootbox { padding: 0 7px 0 2px; gap: 4px; }
.rootname { height: 16px; width: 121px; box-sizing: border-box; padding-left: 4px; background: #808080; color: #fff; display: flex; align-items: center; }
.assembly { margin: 0 14px 0 12px; }
.radio { display: flex; }
.radio input { appearance: none; margin: 0; width: 13px; height: 13px; border: 1px solid #222; border-radius: 50%; background: radial-gradient(circle, #222 0 2px, #fff 3px); }
.bottom { width: 100%; display: grid; grid-template-columns: 1fr auto 1fr; align-items: center; }
.navbars { display: flex; gap: 7px; }
.bar { height: 24px; box-sizing: border-box; background: #cacaca; display: flex; align-items: center; gap: 4px; padding: 0 3px; }
.bar .split { width: 26px; }
.bar .caret { border-width: 4px 3px 0; }
.bar.view { gap: 8px; padding: 0 6px 0 1px; }
</style>
